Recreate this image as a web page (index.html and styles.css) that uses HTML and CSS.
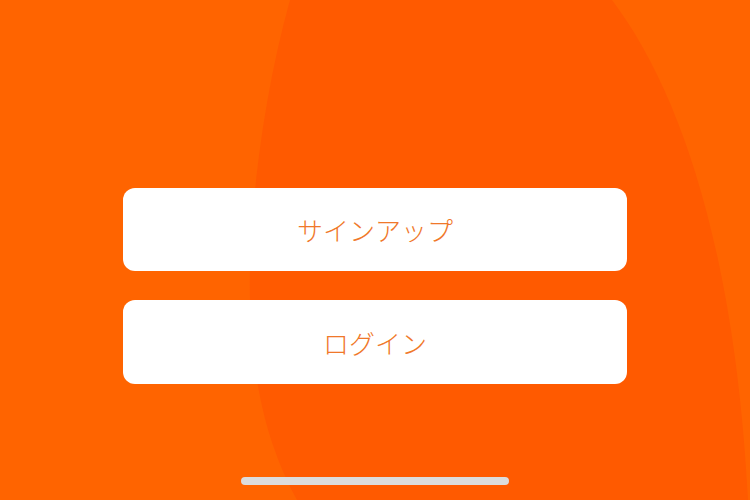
FILE: index.html
```html
<!DOCTYPE html>
<html lang="ja">
<head>
<meta charset="utf-8">
<link rel="stylesheet" href="styles.css">
</head>
<body>
<div class="screen">
  <svg class="bg" width="750" height="500" viewBox="0 0 750 500" aria-hidden="true">
    <path d="M290,0 C262,100 248,220 250,300 C252,390 270,450 297,500 L748,500 C735,250 680,90 612,0 Z" fill="#ff5a00"/>
  </svg>
  <div class="actions">
    <button class="btn">サインアップ</button>
    <button class="btn">ログイン</button>
  </div>
  <div class="home-indicator"></div>
</div>
</body>
</html>
```
FILE: styles.css
```css
html, body {
  margin: 0;
  padding: 0;
}
body {
  width: 750px;
  height: 500px;
  overflow: hidden;
  background: #ff6400;
  font-family: "Noto Sans CJK JP", "Noto Sans", sans-serif;
}
.screen {
  position: relative;
  width: 750px;
  height: 500px;
  display: flex;
  flex-direction: column;
  align-items: center;
  overflow: hidden;
}
.bg {
  position: absolute;
  left: 0;
  top: 0;
}
.actions {
  position: relative;
  margin-top: 188px;
  display: flex;
  flex-direction: column;
  gap: 29px;
}
.btn {
  width: 504px;
  height: 83px;
  border: none;
  border-radius: 12px;
  background: #ffffff;
  color: #f0782a;
  font-family: "Noto Sans CJK JP", "Noto Sans", sans-serif;
  font-size: 26px;
  font-weight: 300;
  padding: 0;
  display: flex;
  align-items: center;
  justify-content: center;
}
.btn + .btn {
  height: 84px;
}
.home-indicator {
  position: relative;
  margin-top: 93px;
  width: 268px;
  height: 8px;
  border-radius: 4px;
  background: #dcdcdc;
}
```
